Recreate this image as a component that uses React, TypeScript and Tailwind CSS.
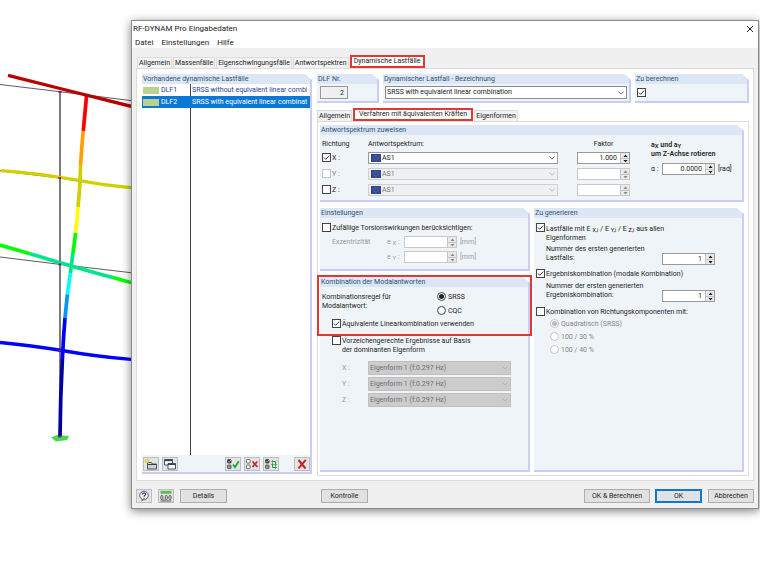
import React from 'react';

type GroupProps = {
  title: string;
  className?: string;
  bodyClass?: string;
  children?: React.ReactNode;
};

function Group({ title, className = '', bodyClass = '', children }: GroupProps) {
  return (
    <section
      className={`flex flex-col border-r-2 border-b-2 border-[#cbccfa] bg-[#eff4f9] [clip-path:polygon(0_0,calc(100%-7px)_0,100%_6px,100%_100%,0_100%)] ${className}`}
    >
      <h2 className="h-[10px] shrink-0 bg-[#dce6f4] pl-px leading-[10px] text-[#2c5378] whitespace-nowrap">{title}</h2>
      <div className={`flex-1 ${bodyClass}`}>{children}</div>
    </section>
  );
}

type CheckProps = {
  label?: React.ReactNode;
  ariaLabel?: string;
  checked?: boolean;
  disabled?: boolean;
  radio?: boolean;
  name?: string;
};

function Check({ label, ariaLabel, checked = false, disabled = false, radio = false, name }: CheckProps) {
  const line = disabled ? 'border-[#c4c4c4]' : 'border-[#444]';
  const dot = disabled ? 'bg-[#bbb]' : 'bg-[#222]';
  return (
    <label className={`flex items-start gap-px leading-[9px] whitespace-nowrap ${disabled ? 'text-[#858585]' : ''}`}>
      <span className="relative size-[9px] shrink-0">
        <input
          type={radio ? 'radio' : 'checkbox'}
          name={name}
          aria-label={ariaLabel}
          defaultChecked={checked}
          disabled={disabled}
          className={`peer block size-[9px] appearance-none border bg-white ${line} ${radio ? 'rounded-full' : ''}`}
        />
        {radio ? (
          <span className={`pointer-events-none absolute inset-[2px] hidden rounded-full peer-checked:block ${dot}`} />
        ) : (
          <svg viewBox="0 0 9 9" className="pointer-events-none absolute inset-0 hidden size-[9px] peer-checked:block">
            <path d="M2 4.6 3.7 6.3 7.2 2.6" fill="none" stroke="#333" strokeWidth="1" />
          </svg>
        )}
      </span>
      {label && <span className={`min-h-[10px] pt-px ${radio ? 'pl-px' : ''}`}>{label}</span>}
    </label>
  );
}

function Spinner({ label, value = '', disabled = false }: { label: string; value?: string; disabled?: boolean }) {
  const fill = disabled ? '#8a8a8a' : '#111';
  return (
    <div className={`flex h-3 w-[53px] shrink-0 border bg-white ${disabled ? 'border-[#c9c9c9]' : 'border-[#9a9a9a]'}`}>
      <input
        type="text"
        aria-label={label}
        defaultValue={value}
        disabled={disabled}
        className="h-full w-full min-w-0 flex-1 pr-[3px] text-right"
      />
      <div className="flex w-[9px] flex-col border-l border-[#c4c4c4] bg-[#e9e9e9]">
        <button type="button" disabled={disabled} aria-label={`${label} +`} className="flex h-[5px] items-center justify-center">
          <svg viewBox="0 0 5 3" className="h-[3px] w-[5px]"><path d="M0.5 3 2.5 0.5 4.5 3z" fill={fill} /></svg>
        </button>
        <button type="button" disabled={disabled} aria-label={`${label} -`} className="flex h-[5px] items-center justify-center border-t border-[#c4c4c4]">
          <svg viewBox="0 0 5 3" className="h-[3px] w-[5px]"><path d="M0.5 0 2.5 2.5 4.5 0z" fill={fill} /></svg>
        </button>
      </div>
    </div>
  );
}

type ComboProps = {
  label: string;
  value: string;
  disabled?: boolean;
  flag?: boolean;
  className?: string;
  selectClass?: string;
};

function Combo({ label, value, disabled = false, flag = false, className = '', selectClass = '' }: ComboProps) {
  return (
    <div className={`relative ${className}`}>
      <select
        aria-label={label}
        disabled={disabled}
        className={`block h-full w-full appearance-none border opacity-100 ${flag ? 'pl-[13px]' : 'pl-px'} ${selectClass}`}
      >
        <option>{value}</option>
      </select>
      {flag && (
        <svg viewBox="0 0 10 8" className="pointer-events-none absolute top-[2px] left-[3px] h-2 w-[10px]">
          <rect width="10" height="8" fill="#2f4699" />
          <circle cx="5" cy="4" r="2.2" fill="none" stroke="#a9a45e" strokeWidth="0.8" strokeDasharray="0.7 0.7" />
        </svg>
      )}
      <svg viewBox="0 0 6 4" className="pointer-events-none absolute top-1/2 right-[3px] h-1 w-[6px] -translate-y-1/2">
        <path d="M0.4 0.5 3 3.2 5.6 0.5" fill="none" stroke={disabled ? '#aaa' : '#444'} strokeWidth="0.8" />
      </svg>
    </div>
  );
}

// deformed frame of the model next to the dialog
function FrameModel() {
  return (
    <svg viewBox="0 0 131 570" className="h-[570px] w-[131px] shrink-0" aria-hidden="true">
      <g fill="none" stroke="#333" strokeWidth="0.8">
        <path d="M0 84.5 60 91.7 131 100.6" />
        <path d="M0 170.8 60 178" />
        <path d="M0 257 60 264.4 131 272.7" />
      </g>
      <path d="M60 91.500V436" stroke="#5b5b5b" strokeWidth="1.6" />
      <path d="M51 437.500 57 435 69 436 67 440 56 441.500z" fill="#48d848" />
      <g fill="none" strokeWidth="3.700">
        <path d="M86.500 96C85.500 108 84.300 119 83.300 131" stroke="#f00" />
        <path d="M83.300 131C82 142 81.500 153 80.500 165" stroke="#ffa000" />
        <path d="M80.500 165C80.500 179 79.500 193 78 207" stroke="#cfcf00" />
        <path d="M78 207Q77.500 220 75.500 233" stroke="#ff0" />
        <path d="M75.500 233Q74.500 244 72.800 254" stroke="#0f0" />
        <path d="M72.800 254 70.300 273.500" stroke="#00e48c" />
        <path d="M70.300 273.500 67.400 294.500" stroke="#0ff" />
        <path d="M67.400 294.500 65 318" stroke="#0094ff" />
        <path d="M65 318Q63.300 338 62.400 359" stroke="#00f" />
        <path d="M62.400 359Q60.300 398 60 436.500" stroke="#0000a0" />
        <path d="M8 75.300 60 88.500 131 106.300" strokeWidth="3.300" stroke="#b80000" />
        <path d="M1 170.700C30 172.500 50 175.500 80 180.700 97 184 113 186 131 187.600" strokeWidth="3.300" stroke="#d0d000" />
        <path d="M0 245 30 253.800" strokeWidth="3.600" stroke="#0f0" />
        <path d="M30 253.800C58 262 84 270 113 277.500" strokeWidth="3.600" stroke="#00e48c" />
        <path d="M113 277.500 131 282.500" strokeWidth="3.600" stroke="#0f0" />
        <path d="M0 342.500C22 344.500 40 347 62 350.500 87 355 108 357.500 131 359.300" strokeWidth="3.300" stroke="#00f" />
      </g>
      <g fill="#8a1280">
        <rect x="58.500" y="91" width="3" height="2" />
        <rect x="58.500" y="177" width="2.500" height="2" />
        <rect x="58.500" y="263.500" width="2.500" height="2" />
        <rect x="58.500" y="349.500" width="2.500" height="2" />
        <rect x="58.500" y="435.500" width="2.500" height="2" />
      </g>
    </svg>
  );
}

function ToolButton({ label, className = '', children }: { label: string; className?: string; children: React.ReactNode }) {
  return (
    <button
      type="button"
      aria-label={label}
      className={`flex h-[14px] w-4 items-center justify-center border border-[#bdbdbd] bg-[#e4e4e4] ${className}`}
    >
      <svg viewBox="0 0 14 12" className="h-3 w-[14px] shrink-0">{children}</svg>
    </button>
  );
}

function CheckPair({ filled }: { filled: boolean }) {
  return (
    <g fill={filled ? '#333' : '#fff'} stroke="#333" strokeWidth="0.7">
      <rect x="1.500" y="1.500" width="3.600" height="3.600" rx="0.800" />
      <rect x="1.500" y="7" width="3.600" height="3.600" rx="0.800" fill={filled ? '#999' : '#fff'} />
      {filled && <path d="M2.300 3.200 3.200 4.200 5.800 1" stroke="#eee" fill="none" />}
    </g>
  );
}

function DialogButton({ children, className = '' }: { children: React.ReactNode; className?: string }) {
  return (
    <button type="button" className={`flex h-[14px] items-center justify-center border bg-[#e1e1e1] whitespace-nowrap ${className}`}>
      {children}
    </button>
  );
}

const tabs = ['Allgemein', 'Massenfälle', 'Eigenschwingungsfälle', 'Antwortspektren'];

const loadCases = [
  { id: 'DLF1', name: 'SRSS without equivalent linear combination', active: false },
  { id: 'DLF2', name: 'SRSS with equivalent linear combination', active: true },
];

const directions = [
  { axis: 'X', checked: true, off: false, comboOff: false, factor: '1.000' },
  { axis: 'Y', checked: false, off: true, comboOff: true, factor: '' },
  { axis: 'Z', checked: false, off: false, comboOff: true, factor: '' },
];

const tabClass = 'h-[11px] border border-b-0 border-[#dcdcdc] bg-[#f3f3f3] px-px leading-[11px] whitespace-nowrap';
const redTabClass = 'h-[13px] border-2 border-[#e2382f] bg-white leading-[9px] whitespace-nowrap';

function Sub({ children }: { children: React.ReactNode }) {
  return <span className="relative top-px text-[6px]">{children}</span>;
}

export default function App() {
  return (
    <div className="flex min-h-screen items-start overflow-hidden bg-white font-['Roboto','Noto_Sans',sans-serif] text-[7px] leading-[9px] text-[#1c1c1c]">
      <FrameModel />

      <main className="mt-5 mr-px flex min-w-0 flex-1 flex-col border border-[#8c8c8c] bg-[#f0f0f0] shadow-[0_2px_9px_rgba(0,0,0,0.5)]">
        <header className="bg-white text-[8px]">
          <div className="flex h-[15px] items-center justify-between pr-1 pl-px">
            <h1 className="whitespace-nowrap">RF-DYNAM Pro Eingabedaten</h1>
            <button type="button" aria-label="Schließen">
              <svg viewBox="0 0 8 8" className="size-2"><path d="M1 1 7 7M7 1 1 7" stroke="#222" strokeWidth="1" /></svg>
            </button>
          </div>
          <nav className="flex h-3 items-center gap-2 pl-[3px]">
            <a href="#datei">Datei</a>
            <a href="#einstellungen">Einstellungen</a>
            <a href="#hilfe">Hilfe</a>
          </nav>
        </header>

        <div className="mt-[7px] flex items-end gap-px px-[5px]">
          {tabs.map((tab) => (
            <button key={tab} type="button" className={tabClass}>{tab}</button>
          ))}
          <button type="button" className={`${redTabClass} px-[2px]`}>Dynamische Lastfälle</button>
        </div>

        <div className="mx-1 flex gap-[5px] border border-[#dcdcdc] bg-white pt-[5px] pr-1 pb-1 pl-[5px]">
          <Group title="Vorhandene dynamische Lastfälle" className="mb-[2px] w-[170px] shrink-0" bodyClass="flex flex-col">
            <div className="flex min-h-[371px] flex-1 flex-col bg-white bg-[linear-gradient(90deg,transparent_48px,#444_48px,#444_49px,transparent_49px)]">
              {loadCases.map((lc) => (
                <button
                  key={lc.id}
                  type="button"
                  className={`flex h-3 items-center text-left ${lc.active ? 'bg-[#0a78d7] text-white' : 'text-[#27439b]'}`}
                >
                  <span className="flex h-full w-12 shrink-0 items-center gap-[2px] pl-px">
                    <span className="h-[7px] w-4 bg-[#bcd18e]" />
                    {lc.id}
                  </span>
                  <span className="mr-[3px] ml-[2px] min-w-0 flex-1 overflow-hidden whitespace-nowrap">{lc.name}</span>
                </button>
              ))}
            </div>
            <div className="flex items-center gap-[3px] pt-[2px] pb-px pl-px">
              <ToolButton label="Neu">
                <path d="M3.500 4.500h4l1 1.500h4v5h-9z" fill="#c8d2de" stroke="#333" strokeWidth="0.800" />
                <path d="M4 6.500h8" stroke="#333" strokeWidth="0.900" />
                <circle cx="3" cy="3" r="1.900" fill="#f2e63c" stroke="#b8a81e" strokeWidth="0.400" />
              </ToolButton>
              <ToolButton label="Kopieren">
                <path d="M1.500 1.500h8v5.500h-8z" fill="#fff" stroke="#345" strokeWidth="0.900" />
                <path d="M1.500 2.500h8" stroke="#345" strokeWidth="1.300" />
                <path d="M5 5.500h7.500v5.500h-7.500z" fill="#fff" stroke="#345" strokeWidth="0.900" />
                <path d="M5 6.300h7.500" stroke="#345" strokeWidth="1.400" />
              </ToolButton>
              <ToolButton label="Alle wählen" className="ml-auto">
                <CheckPair filled />
                <path d="M7 6.500 9 9.300 12.700 3.200" fill="none" stroke="#17a32b" strokeWidth="1.700" />
              </ToolButton>
              <ToolButton label="Auswahl aufheben">
                <CheckPair filled={false} />
                <path d="M7.500 3.500 12.500 9M12.300 3.500 7.500 9" stroke="#c4262b" strokeWidth="1.700" />
              </ToolButton>
              <ToolButton label="Auswahl umkehren">
                <CheckPair filled />
                <path d="M8.500 3.500h3v3M11.500 9.500H8.500V6.500" fill="none" stroke="#249c3e" strokeWidth="1" />
                <path d="M10 6h3L11.500 8zM7 7 8.500 5 10 7zM9 2v3L7 3.500zM11 8v3L13 9.500z" fill="#249c3e" />
              </ToolButton>
              <ToolButton label="Löschen" className="ml-3">
                <path d="M3.500 2 10.500 10.500M10.800 1.800 3.500 10.300" stroke="#c91f26" strokeWidth="2" />
              </ToolButton>
            </div>
          </Group>

          <div className="flex min-w-0 flex-1 flex-col">
            <div className="flex gap-1">
              <Group title="DLF Nr." className="w-[62px]" bodyClass="px-[3px] py-[2px]">
                <input
                  type="text"
                  aria-label="DLF Nr."
                  readOnly
                  value="2"
                  className="block h-[13px] w-7 border border-[#999] bg-[#f0f0f0] pr-[3px] text-right"
                />
              </Group>
              <Group title="Dynamischer Lastfall - Bezeichnung" className="flex-1" bodyClass="px-[2px] py-[2px]">
                <Combo
                  label="Bezeichnung"
                  value="SRSS with equivalent linear combination"
                  className="h-[13px]"
                  selectClass="border-[#8a8a8a] bg-white"
                />
              </Group>
              <Group title="Zu berechnen" className="w-[114px]" bodyClass="px-[2px] pt-1">
                <Check ariaLabel="Zu berechnen" checked />
              </Group>
            </div>

            <div className="mt-[5px] flex items-end gap-px">
              <button type="button" className={tabClass}>Allgemein</button>
              <button type="button" className={`${redTabClass} px-1`}>Verfahren mit äquivalenten Kräften</button>
              <button type="button" className={tabClass}>Eigenformen</button>
            </div>

            <div className="flex flex-1 flex-col border border-[#dcdcdc] pt-[3px] pr-1 pb-[3px] pl-[2px]">
              <Group title="Antwortspektrum zuweisen" bodyClass="flex pt-[5px] pb-1 pl-[2px]">
                <div className="grid flex-1 grid-cols-[46px_1fr_53px] gap-y-1">
                  <div className="-mb-px">Richtung</div>
                  <div className="-mb-px">Antwortspektrum:</div>
                  <div className="-mb-px text-center">Faktor</div>
                  {directions.map((d) => (
                    <React.Fragment key={d.axis}>
                      <div className="pt-px">
                        <Check label={`${d.axis} :`} checked={d.checked} disabled={d.off} />
                      </div>
                      <Combo
                        label={`Antwortspektrum ${d.axis}`}
                        value="AS1"
                        flag
                        disabled={d.comboOff}
                        className="mr-[19px] h-3"
                        selectClass={d.comboOff ? 'border-[#cfcfcf] bg-[#f0f0f0] text-[#777]' : 'border-[#9a9a9a] bg-white'}
                      />
                      <Spinner label={`Faktor ${d.axis}`} value={d.factor} disabled={d.comboOff} />
                    </React.Fragment>
                  ))}
                </div>
                <div className="ml-[21px] w-[91px] whitespace-nowrap">
                  <p className="font-semibold">a<Sub>X</Sub> und a<Sub>Y</Sub></p>
                  <p className="font-semibold">um Z-Achse rotieren</p>
                  <div className="mt-1 flex items-center">
                    <span className="w-[11px]">α :</span>
                    <Spinner label="Winkel" value="0.0000" />
                    <span className="pl-[3px]">[rad]</span>
                  </div>
                </div>
              </Group>

              <div className="mt-[6px] grid flex-1 grid-cols-2 gap-1">
                <div className="flex flex-col gap-[6px]">
                  <Group title="Einstellungen" bodyClass="pt-[5px] pb-[6px] pl-[2px]">
                    <Check label="Zufällige Torsionswirkungen berücksichtigen:" />
                    <div className="mt-[3px] flex flex-col gap-[3px] text-[#9a9a9a]">
                      {['X', 'Y'].map((axis) => (
                        <div key={axis} className="flex items-center">
                          <span className="w-[54px] pl-[10px]">{axis === 'X' ? 'Exzentrizität' : ''}</span>
                          <span className="w-7 pl-[11px] whitespace-nowrap">e <Sub>{axis}</Sub> :</span>
                          <Spinner label={`Exzentrizität ${axis}`} disabled />
                          <span className="pl-[3px]">[mm]</span>
                        </div>
                      ))}
                    </div>
                  </Group>

                  <div className="relative flex flex-1 flex-col">
                    <Group title="Kombination der Modalantworten" className="flex-1" bodyClass="pt-[5px] pl-[2px]">
                      <div className="flex">
                        <p className="w-[115px] pt-px">
                          Kombinationsregel für
                          <br />
                          Modalantwort:
                        </p>
                        <div className="flex flex-col gap-1">
                          <Check radio name="rule" label="SRSS" checked />
                          <Check radio name="rule" label="CQC" />
                        </div>
                      </div>
                      <div className="mt-[3px] pl-[10px]">
                        <Check label="Äquivalente Linearkombination verwenden" checked />
                      </div>
                      <div className="mt-[7px] pl-[10px]">
                        <Check label={<>Vorzeichengerechte Ergebnisse auf Basis<br />der dominanten Eigenform</>} />
                      </div>
                      <div className="mt-[6px] flex flex-col gap-[2px] pr-[17px] pl-5">
                        {['X', 'Y', 'Z'].map((axis) => (
                          <div key={axis} className="flex items-center text-[#9a9a9a]">
                            <span className="w-[26px]">{axis} :</span>
                            <Combo
                              label={`Eigenform ${axis}`}
                              value="Eigenform 1 (f:0.297 Hz)"
                              disabled
                              className="h-[14px] flex-1"
                              selectClass="border-[#bfbfbf] bg-[#cccccc] text-[#6e6e6e]"
                            />
                          </div>
                        ))}
                      </div>
                    </Group>
                    <div className="pointer-events-none absolute -top-[2px] -right-[2px] -left-[3px] h-[61px] border-2 border-[#e2382f]" />
                  </div>
                </div>

                <Group title="Zu generieren" bodyClass="pt-[5px] pl-[2px]">
                  <Check
                    checked
                    label={
                      <>
                        Lastfälle mit E <Sub>X,i</Sub> / E <Sub>Y,i</Sub> / E <Sub>Z,i</Sub> aus allen
                        <br />
                        Eigenformen
                      </>
                    }
                  />
                  <div className="mt-[2px] flex h-5 justify-between pr-[27px] pl-[10px]">
                    <p className="whitespace-nowrap">Nummer des ersten generierten<br />Lastfalls:</p>
                    <div className="self-end"><Spinner label="Nummer des ersten generierten Lastfalls" value="1" /></div>
                  </div>
                  <div className="mt-1">
                    <Check label="Ergebniskombination (modale Kombination)" checked />
                  </div>
                  <div className="mt-[3px] flex h-5 justify-between pr-[27px] pl-[10px]">
                    <p className="whitespace-nowrap">Nummer der ersten generierten<br />Ergebniskombination:</p>
                    <div className="self-end"><Spinner label="Nummer der ersten generierten Ergebniskombination" value="1" /></div>
                  </div>
                  <div className="mt-[5px]">
                    <Check label="Kombination von Richtungskomponenten mit:" />
                  </div>
                  <div className="mt-[2px] flex flex-col gap-[3px] pl-[14px]">
                    <Check radio name="components" disabled checked label="Quadratisch (SRSS)" />
                    <Check radio name="components" disabled label="100 / 30 %" />
                    <Check radio name="components" disabled label="100 / 40 %" />
                  </div>
                </Group>
              </div>
            </div>
          </div>
        </div>

        <footer className="mt-2 flex px-1 pb-[5px]">
          <ToolButton label="Hilfe">
            <circle cx="7" cy="5.500" r="4.300" fill="#f4f6fa" stroke="#556" strokeWidth="0.900" />
            <path d="M5.500 4.500C5.500 2.400 8.700 2.400 8.600 4.300 8.500 5.500 7 5.500 7 6.800M7 7.800v1" fill="none" stroke="#2c3f80" strokeWidth="1.100" />
            <path d="M5 9.500 4 11.500 7 9.800" fill="#556" />
          </ToolButton>
          <ToolButton label="Einheiten" className="ml-[6px]">
            <rect x="1.500" y="0.800" width="11" height="3" fill="#5dbb58" />
            <g fill="none" stroke="#333" strokeWidth="0.800">
              <rect x="1.800" y="5.500" width="2" height="4" rx="0.900" />
              <rect x="6.300" y="5.500" width="2" height="4" rx="0.900" />
              <rect x="10" y="5.500" width="2" height="4" rx="0.900" />
              <path d="M5 9v1.300M1.500 11h11" />
            </g>
          </ToolButton>
          <DialogButton className="ml-[6px] w-[47px] border-[#adadad]">Details</DialogButton>
          <DialogButton className="ml-[94px] w-[47px] border-[#adadad]">Kontrolle</DialogButton>
          <DialogButton className="ml-auto w-[66px] border-[#adadad]">OK &amp; Berechnen</DialogButton>
          <DialogButton className="ml-[5px] w-[47px] border-2 border-[#0a78d7]">OK</DialogButton>
          <DialogButton className="ml-[6px] w-[46px] border-[#adadad]">Abbrechen</DialogButton>
        </footer>
      </main>
    </div>
  );
}
